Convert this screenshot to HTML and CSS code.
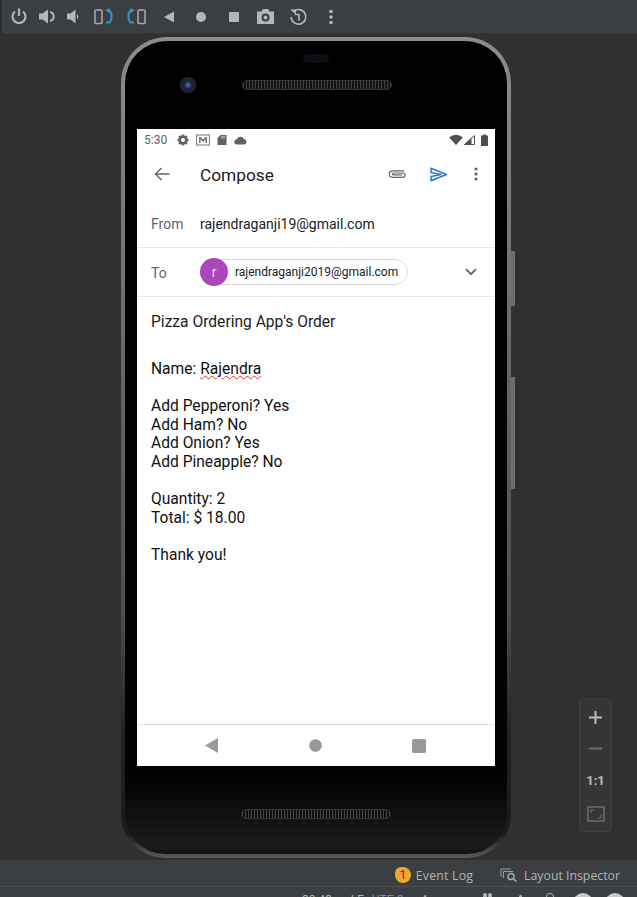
FILE: index.html
```html
<!DOCTYPE html>
<html>
<head>
  <meta charset="UTF-8">
  <title>Emulator - Compose</title>
  <link rel="stylesheet" href="styles.css">
</head>
<body>
  <div class="toolbar">
    <span class="tool tool-power"><svg width="16" height="17" viewBox="0 0 16 17"><path d="M4 3.500a6.500 6.500 0 1 0 8 0M8 .5v7.500" fill="none" stroke="#b4b6b8" stroke-width="2.200"/></svg></span>
    <span class="tool tool-loud"><svg width="18" height="15" viewBox="0 0 18 15"><path d="M1 4.500h3.500L10 .5v14l-5.500-4H1z" fill="#b4b6b8"/><path d="M12 3a4.600 4.600 0 0 1 0 9" fill="none" stroke="#b4b6b8" stroke-width="2"/></svg></span>
    <span class="tool tool-quiet"><svg width="14" height="15" viewBox="0 0 14 15"><path d="M1 4.500h3.500l5-4v14l-5-4H1zM11 5a3 3 0 0 1 0 5z" fill="#b4b6b8"/></svg></span>
    <span class="tool"><svg width="20" height="18" viewBox="0 0 20 18"><rect x="1" y="2" width="7" height="13.500" rx="1" fill="none" stroke="#a9abad" stroke-width="1.500"/><path d="M13 2.500h2.500c2.800 3 2.800 9 0 12H12" fill="none" stroke="#3592c4" stroke-width="2.200"/><path d="M11.500 2.500l4-2.500v5z" fill="#3592c4"/></svg></span>
    <span class="tool"><svg width="20" height="18" viewBox="0 0 20 18"><rect x="12" y="2" width="7" height="13.500" rx="1" fill="none" stroke="#a9abad" stroke-width="1.500"/><path d="M7 2.500H4.500c-2.800 3-2.800 9 0 12H8" fill="none" stroke="#3592c4" stroke-width="2.200"/><path d="M8.500 2.500l-4-2.500v5z" fill="#3592c4"/></svg></span>
    <span class="tool"><svg width="12" height="14" viewBox="0 0 12 14"><path d="M11 1.500v11L1 7z" fill="#b4b6b8"/></svg></span>
    <span class="tool"><svg width="12" height="12" viewBox="0 0 12 12"><circle cx="6" cy="6" r="5" fill="#b4b6b8"/></svg></span>
    <span class="tool"><svg width="12" height="12" viewBox="0 0 12 12"><rect x="1" y="1" width="10" height="10" rx="1" fill="#b4b6b8"/></svg></span>
    <span class="tool"><svg width="19" height="17" viewBox="0 0 19 17"><path fill-rule="evenodd" d="M1 3.500h4.500L7 1h5l1.500 2.500H18V16H1zM9.500 5.500a4 4 0 1 0 0 8 4 4 0 0 0 0-8zM9.500 7.500a2 2 0 1 1 0 4 2 2 0 0 1 0-4z" fill="#b4b6b8"/></svg></span>
    <span class="tool"><svg width="19" height="18" viewBox="0 0 19 18"><path d="M4.500 3.500a7.300 7.300 0 1 1-2.300 5.500M6 6.500h4.500" fill="none" stroke="#b4b6b8" stroke-width="1.700"/><path d="M10 6.500v6" stroke="#b4b6b8" stroke-width="1.700"/><path d="M1 1.500h6v5z" fill="#b4b6b8"/></svg></span>
    <span class="tool"><svg width="6" height="16" viewBox="0 0 6 16"><circle cx="3" cy="2.500" r="1.800" fill="#b4b6b8"/><circle cx="3" cy="8" r="1.800" fill="#b4b6b8"/><circle cx="3" cy="13.500" r="1.800" fill="#b4b6b8"/></svg></span>
  </div>

  <div class="stage">
    <div class="phone">
      <div class="side-btn side-power"></div>
      <div class="side-btn side-volume"></div>
      <div class="bezel-top">
        <div class="earpiece"></div>
        <div class="camera-row">
          <div class="camera"></div>
          <div class="grille"></div>
        </div>
      </div>

      <div class="screen">
        <div class="statusbar">
          <span class="clock">5:30</span>
          <svg width="12" height="12" viewBox="0 0 12 12"><circle cx="6" cy="6" r="3.400" fill="none" stroke="#5f6368" stroke-width="2.800"/><path d="M6 .5v2M6 9.500v2M.5 6h2M9.500 6h2M2 2l1.500 1.500M8.500 8.500L10 10M10 2L8.500 3.500M3.500 8.500L2 10" stroke="#5f6368" stroke-width="1.800"/></svg>
          <svg width="14" height="12" viewBox="0 0 14 12"><rect x=".6" y="1" width="12.800" height="10" fill="none" stroke="#777" stroke-width="1"/><path d="M3 3h1.500L7 5.500 9.500 3H11v6H9.500V5.500L7 8 4.500 5.500V9H3z" fill="#777"/></svg>
          <svg width="10" height="12" viewBox="0 0 10 12"><path d="M3.500 1H9.500v10H.5V4z" fill="#5f6368"/><path d="M5 2v2.500M7 2v2.500" stroke="#fff" stroke-width=".8"/></svg>
          <svg width="13" height="9" viewBox="0 0 13 9"><path d="M3 8.500a2.500 2.500 0 0 1-.4-5A4 4 0 0 1 10 3a2.800 2.800 0 0 1 .3 5.500z" fill="#5f6368"/></svg>
          <span class="status-right">
            <svg width="14" height="10" viewBox="0 0 14 10"><path d="M.2 2.500a10 10 0 0 1 13.600 0L7 10z" fill="#4c4f53"/></svg>
            <svg width="11" height="10" viewBox="0 0 11 10"><path d="M10.500 .5v9H.5z" fill="none" stroke="#4c4f53"/><path d="M7.500 3v6.500H.5z" fill="#4c4f53"/></svg>
            <svg class="battery" width="7" height="12" viewBox="0 0 7 12"><path d="M2 .5h3v1h2V12H0V1.500h2z" fill="#4c4f53"/></svg>
          </span>
        </div>

        <div class="appbar">
          <svg class="back" width="16" height="14" viewBox="0 0 16 14"><path d="M15.500 7H1.500M7.500 1l-6 6 6 6" fill="none" stroke="#5f6368" stroke-width="1.400"/></svg>
          <span class="appbar-title">Compose</span>
          <svg class="attach" width="20" height="12" viewBox="0 0 20 12"><path d="M17 2.800H5.500a3.200 3.200 0 0 0 0 6.500H16a2 2 0 0 0 0-4.300H6.500a.9.900 0 0 0 0 1.800H15" fill="none" stroke="#5f6368" stroke-width="1.200"/></svg>
          <svg class="send" width="18" height="15" viewBox="0 0 18 15"><path d="M1 1.200L16.500 7.500 1 13.800V9.500L11 7.500 1 5.500z" fill="none" stroke="#2a78d6" stroke-width="1.500" stroke-linejoin="round"/></svg>
          <svg class="more" width="4" height="14" viewBox="0 0 4 14"><circle cx="2" cy="2" r="1.600" fill="#5f6368"/><circle cx="2" cy="7" r="1.600" fill="#5f6368"/><circle cx="2" cy="12" r="1.600" fill="#5f6368"/></svg>
        </div>

        <div class="row row-from">
          <span class="row-label">From</span>
          <span class="row-value">rajendraganji19@gmail.com</span>
        </div>
        <div class="row row-to">
          <span class="row-label row-label-to">To</span>
          <span class="chip">
            <span class="avatar">r</span>
            <span class="chip-text">rajendraganji2019@gmail.com</span>
          </span>
          <svg class="chevron" width="12" height="8" viewBox="0 0 12 8"><path d="M1 1.200l5 5 5-5" fill="none" stroke="#5f6368" stroke-width="1.700"/></svg>
        </div>

        <div class="subject">Pizza Ordering App's Order</div>

        <div class="message">
          <p>Name: <span class="misspelled">Rajendra</span></p>
          <p>Add Pepperoni? Yes<br>Add Ham? No<br>Add Onion? Yes<br>Add Pineapple? No</p>
          <p>Quantity: 2<br>Total: $ 18.00</p>
          <p>Thank you!</p>
        </div>

        <div class="navbar">
          <svg width="14" height="15" viewBox="0 0 14 15"><path d="M13 0v15L0 7.500z" fill="#999"/></svg>
          <svg width="13" height="13" viewBox="0 0 13 13"><circle cx="6.500" cy="6.500" r="6.300" fill="#999"/></svg>
          <svg width="14" height="14" viewBox="0 0 14 14"><rect width="14" height="14" rx="1.500" fill="#999"/></svg>
        </div>
      </div>

      <div class="bezel-bottom">
        <div class="grille"></div>
      </div>
    </div>

    <div class="zoom-panel">
      <svg width="13" height="13" viewBox="0 0 13 13"><path d="M6.500 0v13M0 6.500h13" stroke="#bbb" stroke-width="2"/></svg>
      <svg width="13" height="13" viewBox="0 0 13 13"><path d="M0 6.500h13" stroke="#6c6e70" stroke-width="2"/></svg>
      <span class="zoom-one">1:1</span>
      <svg width="18" height="16" viewBox="0 0 18 16"><rect x="1" y="1" width="16" height="14" fill="none" stroke="#6c6e70" stroke-width="1.500"/><path d="M4 7V4h3M14 9v3h-3" fill="none" stroke="#6c6e70"/></svg>
    </div>
  </div>

  <div class="tool-tabs">
    <span class="badge">1</span>
    <span class="tab-label tab-event">Event Log</span>
    <svg width="19" height="15" viewBox="0 0 19 15"><path d="M1 9V1h10M3.500 10V3.500H13" fill="none" stroke="#9a9c9e"/><circle cx="11" cy="8.500" r="3" fill="none" stroke="#a9abad" stroke-width="1.400"/><path d="M13 10.500l3.500 3" stroke="#a9abad" stroke-width="1.600"/></svg>
    <span class="tab-label">Layout Inspector</span>
  </div>
  <div class="status-line">
    <span class="cell-pos">30:43</span>
    <span class="cell-lf">LF</span>
    <span class="cell-enc">UTF-8</span>
    <span class="cell-indent">4</span>
    <span class="dot"></span>
    <span class="dot dot-last"></span>
    <span class="dot dot-small"></span>
    <span class="ring"></span>
    <span class="blob"></span>
    <span class="blob"></span>
  </div>
</body>
</html>
```

FILE: styles.css
```css
html, body {
  margin: 0;
  height: 100%;
}

body {
  width: 637px;
  height: 897px;
  overflow: hidden;
  display: flex;
  flex-direction: column;
  background-color: #2e3032;
  font-family: Roboto, "Liberation Sans", sans-serif;
}

.toolbar {
  height: 34px;
  flex: none;
  box-sizing: border-box;
  display: flex;
  align-items: center;
  padding-left: 6px;
  gap: 10.400px;
  background-color: #3c3f41;
  border-left: 2px solid #2b2b2b;
  border-bottom: 1px solid #333537;
}

.tool {
  width: 22px;
  flex: none;
  display: flex;
  align-items: center;
  justify-content: center;
}

.tool-power {
  margin-right: -4.400px;
}

.tool-loud {
  margin-right: -6.400px;
}

.tool-quiet {
  margin-right: -1.400px;
}

.stage {
  position: relative;
  height: 826px;
  flex: none;
  padding: 3px 0 0 121px;
  box-sizing: border-box;
}

.phone {
  position: relative;
  width: 390px;
  height: 821px;
  box-sizing: border-box;
  padding: 0 12px;
  display: flex;
  flex-direction: column;
  border: 4px solid transparent;
  border-radius: 46px 46px 44px 44px;
  background:
    linear-gradient(to bottom, #000 90%, #1c1c1c 99%, #111 100%) padding-box,
    linear-gradient(to bottom, #8c8c8c 0, #5e5e5e 50%, #4e4e4e 70%, #222 85%, #1a1a1a 97%, #5a5a5a 100%) border-box;
}

.side-btn {
  position: absolute;
  right: -8px;
  width: 4px;
  background-color: #6c6e70;
}

.side-power {
  top: 210px;
  height: 55px;
}

.side-volume {
  top: 336px;
  height: 112px;
}

.bezel-top {
  height: 88px;
  flex: none;
  display: flex;
  flex-direction: column;
  align-items: center;
}

.earpiece {
  width: 26px;
  height: 9px;
  margin-top: 13px;
  border-radius: 5px;
  background-color: #0c0f14;
}

.camera-row {
  width: 100%;
  display: flex;
  align-items: center;
  margin-top: 14px;
}

.camera {
  width: 16px;
  height: 16px;
  margin-left: 43px;
  margin-right: 46px;
  border-radius: 50%;
  background: radial-gradient(circle, #5a70e0 0, #1c2238 35%, #23262b 70%);
}

.grille {
  width: 148px;
  height: 8px;
  border: 1px solid #333;
  border-radius: 5px;
  background: repeating-linear-gradient(90deg, #444 0, #444 1px, #111 1px, #111 3px);
}

.screen {
  height: 637px;
  flex: none;
  display: flex;
  flex-direction: column;
  background-color: #fff;
}

.statusbar {
  height: 22px;
  flex: none;
  display: flex;
  align-items: center;
  gap: 7px;
  padding: 0 7px 0 7px;
}

.clock {
  font-size: 12px;
  margin-right: 3px;
  color: #5f6368;
}

.status-right {
  margin-left: auto;
  display: flex;
  align-items: center;
  gap: 1px;
}

.battery {
  margin-left: 5px;
}

.appbar {
  height: 46px;
  flex: none;
  display: flex;
  align-items: center;
}

.back {
  margin-left: 17px;
}

.appbar-title {
  margin: 2px 0 0 30px;
  font-size: 17.300px;
  color: #202124;
}

.attach {
  margin-left: auto;
}

.send {
  margin-left: 23px;
}

.more {
  margin: 0 17px 0 26px;
}

.row {
  display: flex;
  align-items: center;
  flex: none;
  border-bottom: 1px solid #e8e8e8;
}

.row-from {
  height: 46px;
  padding-top: 4px;
}

.row-to {
  height: 48px;
}

.row-label {
  width: 49px;
  margin-left: 14px;
  font-size: 14px;
  color: #5f6368;
}

.row-label-to {
  margin-top: 2px;
}

.row-value {
  font-size: 14px;
  color: #202124;
}

.chip {
  display: flex;
  align-items: center;
  height: 26px;
  width: 208px;
  box-sizing: border-box;
  border: 1px solid #dadce0;
  border-radius: 14px;
}

.avatar {
  width: 28px;
  height: 28px;
  margin-left: -1px;
  flex: none;
  display: flex;
  align-items: center;
  justify-content: center;
  border-radius: 50%;
  font-size: 14px;
  color: #f0dff3;
  background-color: #ab47bc;
}

.chip-text {
  margin-left: 7px;
  font-size: 12px;
  white-space: nowrap;
  color: #202124;
}

.chevron {
  margin-left: auto;
  margin-right: 18px;
}

.subject {
  margin: 16px 14px 0;
  flex: none;
  font-size: 15.600px;
  line-height: 18px;
  color: #202124;
}

.message {
  flex: 1;
  margin: 29px 14px 0;
  font-size: 15.600px;
  line-height: 18.600px;
  color: #111;
}

.message p {
  margin: 0 0 18.600px;
}

.misspelled {
  text-decoration: underline wavy #d93025 1px;
  text-underline-offset: 1px;
}

.navbar {
  height: 41px;
  flex: none;
  display: flex;
  align-items: center;
  padding-left: 68px;
  gap: 90px;
  border-top: 1px solid #dcdcdc;
}

.bezel-bottom {
  flex: 1;
  display: flex;
  justify-content: center;
  padding-top: 43px;
}

.zoom-panel {
  position: absolute;
  left: 579px;
  top: 664px;
  width: 33px;
  height: 134px;
  box-sizing: border-box;
  padding: 12px 0 9px;
  display: flex;
  flex-direction: column;
  align-items: center;
  justify-content: space-between;
  background-color: #343638;
  border: 1px solid #3d3f41;
  border-radius: 4px;
}

.zoom-one {
  font-size: 13px;
  font-weight: 700;
  color: #bbb;
}

.tool-tabs {
  height: 27px;
  flex: none;
  box-sizing: border-box;
  display: flex;
  align-items: center;
  justify-content: flex-end;
  padding: 4px 17px 0 0;
  background-color: #3c3f41;
  border-bottom: 1px solid #4a4c4e;
}

.badge {
  width: 16px;
  height: 16px;
  display: flex;
  align-items: center;
  justify-content: center;
  border-radius: 6px 8px 8px 8px;
  font-size: 12px;
  color: #3c3f41;
  background-color: #f0a732;
}

.tab-label {
  margin-left: 5px;
  font-family: "Open Sans", "Liberation Sans", sans-serif;
  font-size: 12.300px;
  color: #b0b2b4;
}

.tab-event {
  margin-right: 27px;
  letter-spacing: .2px;
}

.status-line {
  flex: 1;
  overflow: hidden;
  display: flex;
  align-items: flex-start;
  padding: 6px 0 0 302px;
  font-size: 12px;
  line-height: 14px;
  color: #b0b2b4;
  background-color: #3c3f41;
}

.cell-pos {
  width: 56px;
}

.cell-lf {
  width: 24px;
}

.cell-enc {
  width: 56px;
  color: #7b8a9a;
}

.cell-indent {
  width: 71px;
}

.dot {
  width: 5px;
  height: 5px;
  margin-right: 1px;
  border-radius: 50%;
  background-color: #b0b2b4;
}

.dot-last {
  margin-right: 27px;
}

.dot-small {
  width: 3px;
  height: 3px;
  margin: 2px 24px 0 0;
}

.ring {
  width: 7px;
  height: 7px;
  margin-right: 19px;
  border: 1px solid #b0b2b4;
  border-radius: 50%;
}

.blob {
  width: 20px;
  height: 20px;
  flex: none;
  margin-right: 12px;
  border-radius: 50%;
  background-color: #c8c9ca;
}
```
